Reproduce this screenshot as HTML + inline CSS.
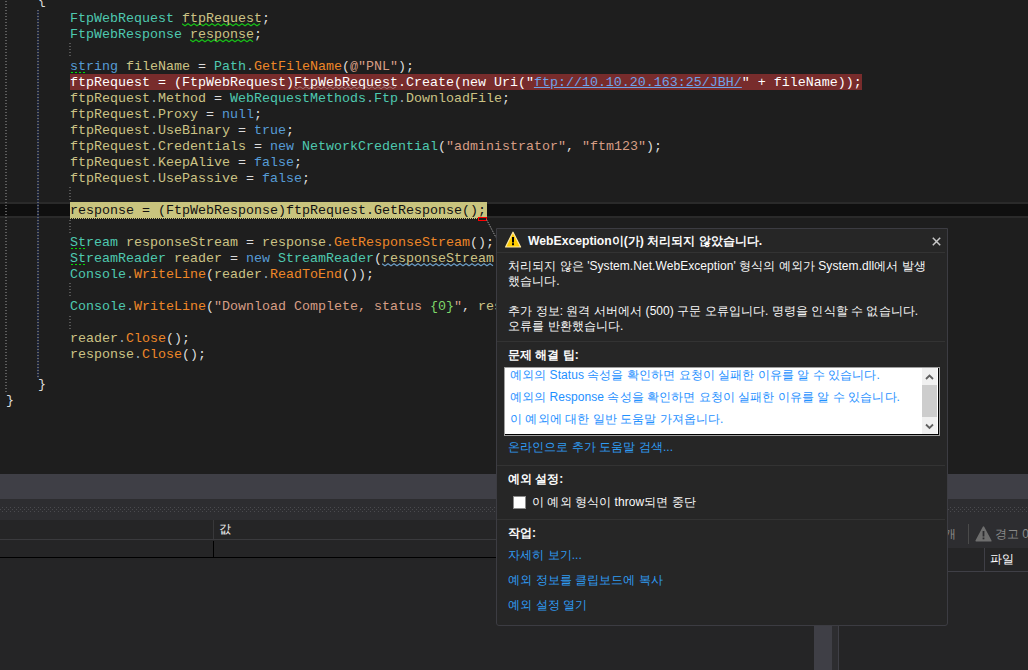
<!DOCTYPE html>
<html><head><meta charset="utf-8">
<style>
*{box-sizing:border-box}
html,body{margin:0;padding:0;width:1028px;height:670px;overflow:hidden;background:#1e1e1e}
.abs{position:absolute}
#ed{position:absolute;left:0;top:0;width:1028px;height:474px;background:#1e1e1e;overflow:hidden}
.ln{position:absolute;left:6px;height:16px;line-height:16px;white-space:pre;font-family:"Liberation Mono",monospace;font-size:13.333px;color:#dcdcdc}
.k{color:#569cd6}.t{color:#4ec9b0}.i{color:#ccc385}.m{color:#ee8728}.s{color:#d69d85}.p{color:#dcdcdc}.d{color:#9ab}.g{color:#7fd86a}.w{color:#fff}.u{color:#6fa2e8;text-decoration:underline}.y{color:#111}
.cur{position:absolute;left:0;top:202px;width:1028px;height:16px;background:#0f0f0f;border-top:2px solid #2a2a2a;border-bottom:2px solid #2a2a2a}
.guide{position:absolute;width:1px;background:repeating-linear-gradient(to bottom,#555 0,#555 1px,transparent 1px,transparent 3px)}
#bot{position:absolute;left:0;top:474px;width:1028px;height:196px;background:#252526}
.dots{background:repeating-linear-gradient(to right,#4a4a4e 0,#4a4a4e 1px,transparent 1px,transparent 4px)}
.ui{font-family:"Liberation Sans",sans-serif}
#dlg{position:absolute;left:496px;top:228px;width:452px;height:398px;background:#262626;border:1px solid #3c3c42;border-radius:0 0 3px 3px;font-family:"Liberation Sans",sans-serif;font-size:12px;color:#fafafa}
.lnk{color:#2f9cf4}.lnk2{color:#1e90ff}.tt{font-weight:bold;font-size:12.2px;line-height:17px;white-space:nowrap}.tx{letter-spacing:0.06px;font-size:12px;line-height:15px;white-space:nowrap}.hd{font-weight:bold;font-size:12px;line-height:15px;white-space:nowrap}.sep{position:absolute;left:0;right:2px;height:1px;background:#333}
</style></head><body>
<div id="ed">
  <div class="cur"></div>
<div class="abs" style="left:70px;top:74px;width:792px;height:16px;background:#782c2c"></div>
    <div class="abs" style="left:70px;top:202px;width:417px;height:16px;background:#c9c47e"></div>
  <div class="abs" style="left:70px;top:218px;width:408px;height:1px;background:repeating-linear-gradient(to right,#c9c47e 0,#c9c47e 1px,transparent 1px,transparent 2px)"></div>
  <div class="abs" style="left:5px;top:1px;width:2px;height:392px;background:repeating-linear-gradient(to bottom,#5c5c5c 0,#5c5c5c 1px,transparent 1px,transparent 3px)"></div>
  <div class="abs" style="left:37px;top:10px;width:2px;height:368px;background:repeating-linear-gradient(to bottom,#646464 0,#646464 1px,#1d2640 1px,#1d2640 3px)"></div>
  <div class="abs" style="left:69px;top:43px;width:2px;height:14px;background:repeating-linear-gradient(to bottom,#555 0,#555 1px,transparent 1px,transparent 3px)"></div>
  <div class="abs" style="left:69px;top:187px;width:2px;height:14px;background:repeating-linear-gradient(to bottom,#555 0,#555 1px,transparent 1px,transparent 3px)"></div>
  <div class="abs" style="left:69px;top:220px;width:2px;height:13px;background:repeating-linear-gradient(to bottom,#555 0,#555 1px,transparent 1px,transparent 3px)"></div>
  <div class="abs" style="left:69px;top:283px;width:2px;height:14px;background:repeating-linear-gradient(to bottom,#555 0,#555 1px,transparent 1px,transparent 3px)"></div>
  <div class="abs" style="left:69px;top:316px;width:2px;height:13px;background:repeating-linear-gradient(to bottom,#555 0,#555 1px,transparent 1px,transparent 3px)"></div>
  <svg class="abs" style="left:182px;top:23px;opacity:1" width="81" height="4"><polyline points="0,0.7 3,2.7 6,0.7 9,2.7 12,0.7 15,2.7 18,0.7 21,2.7 24,0.7 27,2.7 30,0.7 33,2.7 36,0.7 39,2.7 42,0.7 45,2.7 48,0.7 51,2.7 54,0.7 57,2.7 60,0.7 63,2.7 66,0.7 69,2.7 72,0.7 75,2.7 78,0.7" fill="none" stroke="#18c018" stroke-width="1.2"/></svg>
  <svg class="abs" style="left:190px;top:39px;opacity:1" width="65" height="4"><polyline points="0,0.7 3,2.7 6,0.7 9,2.7 12,0.7 15,2.7 18,0.7 21,2.7 24,0.7 27,2.7 30,0.7 33,2.7 36,0.7 39,2.7 42,0.7 45,2.7 48,0.7 51,2.7 54,0.7 57,2.7 60,0.7 63,2.7" fill="none" stroke="#18c018" stroke-width="1.2"/></svg>
  <svg class="abs" style="left:294px;top:86px;opacity:0.55" width="105" height="4"><polyline points="0,0.7 3,2.7 6,0.7 9,2.7 12,0.7 15,2.7 18,0.7 21,2.7 24,0.7 27,2.7 30,0.7 33,2.7 36,0.7 39,2.7 42,0.7 45,2.7 48,0.7 51,2.7 54,0.7 57,2.7 60,0.7 63,2.7 66,0.7 69,2.7 72,0.7 75,2.7 78,0.7 81,2.7 84,0.7 87,2.7 90,0.7 93,2.7 96,0.7 99,2.7 102,0.7" fill="none" stroke="#c0b0b0" stroke-width="1"/></svg>
  <svg class="abs" style="left:382px;top:263px;opacity:1" width="113" height="4"><polyline points="0,0.7 3,2.7 6,0.7 9,2.7 12,0.7 15,2.7 18,0.7 21,2.7 24,0.7 27,2.7 30,0.7 33,2.7 36,0.7 39,2.7 42,0.7 45,2.7 48,0.7 51,2.7 54,0.7 57,2.7 60,0.7 63,2.7 66,0.7 69,2.7 72,0.7 75,2.7 78,0.7 81,2.7 84,0.7 87,2.7 90,0.7 93,2.7 96,0.7 99,2.7 102,0.7 105,2.7 108,0.7 111,2.7" fill="none" stroke="#6a9cc4" stroke-width="1.2"/></svg>
  <div class="abs" style="left:71px;top:72px;width:16px;height:1px;background:repeating-linear-gradient(to right,#00e000 0,#00e000 2px,transparent 2px,transparent 4px)"></div>
  <div class="abs" style="left:71px;top:248px;width:16px;height:1px;background:repeating-linear-gradient(to right,#00e000 0,#00e000 2px,transparent 2px,transparent 4px)"></div>
  <div class="abs" style="left:71px;top:264px;width:16px;height:1px;background:repeating-linear-gradient(to right,#00e000 0,#00e000 2px,transparent 2px,transparent 4px)"></div>
  <div class="abs" style="left:478px;top:217px;width:9px;height:4px;border:1px solid #ff0000"></div>
  <svg class="abs" style="left:486px;top:219px" width="12" height="20"><line x1="0.5" y1="0.5" x2="10" y2="18.5" stroke="#9a9a9a" stroke-width="1" stroke-dasharray="1.5 1"/></svg>
<div class="ln" style="top:-7px"><span class="p">    {</span></div>
<div class="ln" style="top:11px"><span class="p">        </span><span class="t">FtpWebRequest</span><span class="p"> </span><span class="i">ftpRequest</span><span class="p">;</span></div>
<div class="ln" style="top:27px"><span class="p">        </span><span class="t">FtpWebResponse</span><span class="p"> </span><span class="i">response</span><span class="p">;</span></div>
<div class="ln" style="top:59px"><span class="p">        </span><span class="k">string</span><span class="p"> </span><span class="i">fileName</span><span class="p"> = </span><span class="t">Path</span><span class="d">.</span><span class="m">GetFileName</span><span class="p">(</span><span class="s">@&quot;PNL&quot;</span><span class="p">);</span></div>
<div class="ln" style="top:75px"><span class="w">        ftpRequest = (FtpWebRequest)FtpWebRequest.Create(new Uri(&quot;</span><span class="u">ftp://10.10.20.163:25/JBH/</span><span class="w">&quot; + fileName));</span></div>
<div class="ln" style="top:91px"><span class="p">        </span><span class="i">ftpRequest</span><span class="d">.</span><span class="i">Method</span><span class="p"> = </span><span class="t">WebRequestMethods</span><span class="d">.</span><span class="t">Ftp</span><span class="d">.</span><span class="i">DownloadFile</span><span class="p">;</span></div>
<div class="ln" style="top:107px"><span class="p">        </span><span class="i">ftpRequest</span><span class="d">.</span><span class="i">Proxy</span><span class="p"> = </span><span class="k">null</span><span class="p">;</span></div>
<div class="ln" style="top:123px"><span class="p">        </span><span class="i">ftpRequest</span><span class="d">.</span><span class="i">UseBinary</span><span class="p"> = </span><span class="k">true</span><span class="p">;</span></div>
<div class="ln" style="top:139px"><span class="p">        </span><span class="i">ftpRequest</span><span class="d">.</span><span class="i">Credentials</span><span class="p"> = </span><span class="k">new</span><span class="p"> </span><span class="t">NetworkCredential</span><span class="p">(</span><span class="s">&quot;administrator&quot;</span><span class="p">, </span><span class="s">&quot;ftm123&quot;</span><span class="p">);</span></div>
<div class="ln" style="top:155px"><span class="p">        </span><span class="i">ftpRequest</span><span class="d">.</span><span class="i">KeepAlive</span><span class="p"> = </span><span class="k">false</span><span class="p">;</span></div>
<div class="ln" style="top:171px"><span class="p">        </span><span class="i">ftpRequest</span><span class="d">.</span><span class="i">UsePassive</span><span class="p"> = </span><span class="k">false</span><span class="p">;</span></div>
<div class="ln" style="top:203px"><span class="p">        </span><span class="y">response = (FtpWebResponse)ftpRequest.GetResponse();</span></div>
<div class="ln" style="top:235px"><span class="p">        </span><span class="t">Stream</span><span class="p"> </span><span class="i">responseStream</span><span class="p"> = </span><span class="i">response</span><span class="d">.</span><span class="m">GetResponseStream</span><span class="p">();</span></div>
<div class="ln" style="top:251px"><span class="p">        </span><span class="t">StreamReader</span><span class="p"> </span><span class="i">reader</span><span class="p"> = </span><span class="k">new</span><span class="p"> </span><span class="t">StreamReader</span><span class="p">(</span><span class="i">responseStream</span><span class="p">);</span></div>
<div class="ln" style="top:267px"><span class="p">        </span><span class="t">Console</span><span class="d">.</span><span class="m">WriteLine</span><span class="p">(</span><span class="i">reader</span><span class="d">.</span><span class="m">ReadToEnd</span><span class="p">());</span></div>
<div class="ln" style="top:299px"><span class="p">        </span><span class="t">Console</span><span class="d">.</span><span class="m">WriteLine</span><span class="p">(</span><span class="s">&quot;Download Complete, status </span><span class="g">{0}</span><span class="s">&quot;</span><span class="p">, </span><span class="i">response</span><span class="d">.</span><span class="i">StatusDescription</span><span class="p">);</span></div>
<div class="ln" style="top:331px"><span class="p">        </span><span class="i">reader</span><span class="d">.</span><span class="m">Close</span><span class="p">();</span></div>
<div class="ln" style="top:347px"><span class="p">        </span><span class="i">response</span><span class="d">.</span><span class="m">Close</span><span class="p">();</span></div>
<div class="ln" style="top:377px"><span class="p">    }</span></div>
<div class="ln" style="top:393px"><span class="p">}</span></div>
</div>
<div id="bot">
  <div class="abs" style="left:0;top:0;width:1028px;height:25px;background:#3f3f46"></div>
  <div class="abs" style="left:0;top:25px;width:1028px;height:21px;background:#2d2d30"></div>
  <div class="abs dots" style="left:2px;top:33px;width:1026px;height:1px"></div>
  <div class="abs dots" style="left:0;top:35px;width:1028px;height:1px"></div>
  <div class="abs dots" style="left:2px;top:37px;width:1026px;height:1px"></div>
  <!-- left panel -->
  <div class="abs" style="left:0;top:46px;width:839px;height:19px;background:#252526"></div>
  <div class="abs" style="left:213px;top:46px;width:1px;height:19px;background:#38383a"></div>
  <div class="abs" style="left:0;top:65px;width:839px;height:1px;background:#3a3a3d"></div>
  <div class="abs ui" style="left:219px;top:47px;font-size:12px;line-height:17px;color:#f1f1f1">값</div>
  <div class="abs" style="left:213px;top:67px;width:1px;height:17px;background:#000"></div>
  <div class="abs" style="left:0;top:83px;width:839px;height:1px;background:#000"></div>
  <div class="abs" style="left:814px;top:152px;width:18px;height:44px;background:#3f3f46"></div>
  <div class="abs" style="left:832px;top:152px;width:6px;height:44px;background:#2d2d30"></div>
  <div class="abs" style="left:838px;top:46px;width:1px;height:150px;background:#3f3f46"></div>
  <!-- right panel -->
  <div class="abs" style="left:839px;top:46px;width:189px;height:28px;background:#2d2d30"></div>
  <div class="abs ui" style="left:944px;top:52px;font-size:12px;line-height:17px;color:#8a8a8a">개</div>
  <div class="abs" style="left:968px;top:50px;width:1px;height:20px;background:#4a4a4a"></div>
  <svg class="abs" style="left:975px;top:52px" width="17" height="16" viewBox="0 0 17 16"><path d="M8.5 1.2 L15.8 14.8 L1.2 14.8 Z" fill="#6e6e6e" stroke="#6e6e6e" stroke-width="1.6" stroke-linejoin="round"/><rect x="7.6" y="5" width="1.8" height="5.5" fill="#2d2d30"/><rect x="7.6" y="11.5" width="1.8" height="1.8" fill="#2d2d30"/></svg>
  <div class="abs ui" style="left:995px;top:52px;font-size:12px;line-height:17px;color:#8a8a8a;white-space:nowrap">경고 0</div>
  <div class="abs" style="left:984px;top:74px;width:1px;height:23px;background:#3f3f46"></div>
  <div class="abs" style="left:839px;top:97px;width:189px;height:1px;background:#3f3f46"></div>
  <div class="abs ui" style="left:990px;top:77px;font-size:12px;line-height:17px;color:#fff">파일</div>
</div>
<div id="dlg">
  <svg class="abs" style="left:8px;top:2px" width="17" height="18" viewBox="0 0 17 18"><path d="M8 1.2 L15.6 16 L0.6 16 Z" fill="#ffcc00" stroke="#ffe9a0" stroke-width="1.2" stroke-linejoin="round"/><rect x="7" y="6" width="2" height="5.5" fill="#000"/><rect x="7" y="12.2" width="2" height="2" fill="#000"/></svg>
  <div class="abs tt" style="left:31px;top:4px">WebException이(가) 처리되지 않았습니다.</div>
  <svg class="abs" style="left:435px;top:8px" width="9" height="9" viewBox="0 0 9 9"><path d="M0.8 0.8 L8.2 8.2 M8.2 0.8 L0.8 8.2" stroke="#c8c8c8" stroke-width="1.5"/></svg>
  <div class="sep" style="top:23px"></div>
  <div class="abs tx" style="left:11px;top:30px">처리되지 않은 'System.Net.WebException' 형식의 예외가 System.dll에서 발생</div>
  <div class="abs tx" style="left:11px;top:45px">했습니다.</div>
  <div class="abs tx" style="left:11px;top:75px">추가 정보: 원격 서버에서 (500) 구문 오류입니다. 명령을 인식할 수 없습니다.</div>
  <div class="abs tx" style="left:11px;top:90px">오류를 반환했습니다.</div>
  <div class="sep" style="top:112px"></div>
  <div class="abs hd" style="left:11px;top:119px">문제 해결 팁:</div>
  <div class="abs" style="left:7px;top:138px;width:436px;height:69px;background:#fff;border:1px solid #a0a0a0;box-shadow:inset -1px -1px 0 #000"></div>
  <div class="abs" style="left:425px;top:139px;width:15px;height:66px;background:#f0f0f0"></div>
  <div class="abs" style="left:425px;top:156px;width:15px;height:32px;background:#cdcdcd"></div>
  <svg class="abs" style="left:425px;top:140px" width="15" height="16" viewBox="0 0 15 16"><path d="M4 10 L7.5 6.5 L11 10" fill="none" stroke="#606060" stroke-width="1.8"/></svg>
  <svg class="abs" style="left:425px;top:189px" width="15" height="16" viewBox="0 0 15 16"><path d="M4 6.5 L7.5 10 L11 6.5" fill="none" stroke="#606060" stroke-width="1.8"/></svg>
  <div class="abs tx lnk2" style="left:13px;top:139px">예외의 Status 속성을 확인하면 요청이 실패한 이유를 알 수 있습니다.</div>
  <div class="abs tx lnk2" style="left:13px;top:161px">예외의 Response 속성을 확인하면 요청이 실패한 이유를 알 수 있습니다.</div>
  <div class="abs tx lnk2" style="left:13px;top:183px">이 예외에 대한 일반 도움말 가져옵니다.</div>
  <div class="abs tx lnk" style="left:11px;top:211px">온라인으로 추가 도움말 검색...</div>
  <div class="sep" style="top:236px"></div>
  <div class="abs hd" style="left:11px;top:243px">예외 설정:</div>
  <div class="abs" style="left:16px;top:267px;width:13px;height:13px;background:#fff;border:1px solid #8c8c8c"></div>
  <div class="abs tx" style="left:35px;top:266px">이 예외 형식이 throw되면 중단</div>
  <div class="sep" style="top:290px"></div>
  <div class="abs hd" style="left:11px;top:297px">작업:</div>
  <div class="abs tx lnk" style="left:11px;top:319px">자세히 보기...</div>
  <div class="abs tx lnk" style="left:11px;top:344px">예외 정보를 클립보드에 복사</div>
  <div class="abs tx lnk" style="left:11px;top:369px">예외 설정 열기</div>
</div>
</body></html>
